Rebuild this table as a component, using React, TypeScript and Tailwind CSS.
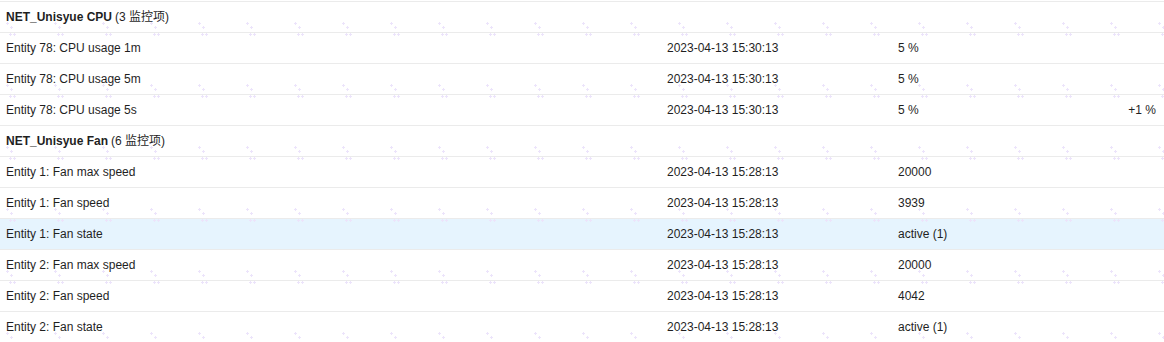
import React from "react";

type Row =
  | { kind: "group"; name: string; count: string }
  | { kind: "item"; name: string; time: string; value: string; change?: string; hl?: boolean };

const rows: Row[] = [
  { kind: "group", name: "NET_Unisyue CPU", count: "(3 监控项)" },
  { kind: "item", name: "Entity 78: CPU usage 1m", time: "2023-04-13 15:30:13", value: "5 %" },
  { kind: "item", name: "Entity 78: CPU usage 5m", time: "2023-04-13 15:30:13", value: "5 %" },
  { kind: "item", name: "Entity 78: CPU usage 5s", time: "2023-04-13 15:30:13", value: "5 %", change: "+1 %" },
  { kind: "group", name: "NET_Unisyue Fan", count: "(6 监控项)" },
  { kind: "item", name: "Entity 1: Fan max speed", time: "2023-04-13 15:28:13", value: "20000" },
  { kind: "item", name: "Entity 1: Fan speed", time: "2023-04-13 15:28:13", value: "3939" },
  { kind: "item", name: "Entity 1: Fan state", time: "2023-04-13 15:28:13", value: "active (1)", hl: true },
  { kind: "item", name: "Entity 2: Fan max speed", time: "2023-04-13 15:28:13", value: "20000" },
  { kind: "item", name: "Entity 2: Fan speed", time: "2023-04-13 15:28:13", value: "4042" },
  { kind: "item", name: "Entity 2: Fan state", time: "2023-04-13 15:28:13", value: "active (1)" },
];

function Watermark() {
  return (
    <svg className="pointer-events-none absolute inset-0 h-full w-full" aria-hidden="true">
      <defs>
        <pattern id="wm" x="0" y="0" width="48" height="62" patternUnits="userSpaceOnUse">
          <g stroke="#ece4fb" strokeWidth="1" shapeRendering="crispEdges">
            <path d="M9 34.5h3M10.5 33v3M13 34.5h3M14.5 33v3" />
            <path d="M6 23.5h3M7.5 22v3M10 27.5h3M11.5 26v3" />
          </g>
        </pattern>
      </defs>
      <rect x="0" y="0" width="100%" height="100%" fill="url(#wm)" />
    </svg>
  );
}

export default function App() {
  return (
    <div
      className="relative w-[1164px] h-[342px] overflow-hidden bg-white pt-px text-[12px] text-[#1f1f1f]"
      style={{ fontFamily: '"Liberation Sans", Arial, "Noto Sans CJK SC", sans-serif' }}
    >
      {rows.map((r, i) =>
        r.kind === "group" ? (
          <div key={i} className="flex h-[31px] items-center border-t border-[#ebebeb] px-[6px]">
            <span className="font-bold">{r.name}</span>
            <span className="ml-[3px]">{r.count}</span>
          </div>
        ) : (
          <div
            key={i}
            className={
              "flex h-[31px] items-center border-t border-[#ebebeb] " + (r.hl ? "bg-[#e6f4fe]" : "")
            }
          >
            <div className="w-[667px] pl-[6px]">{r.name}</div>
            <div className="w-[231px]">{r.time}</div>
            <div className="w-[200px]">{r.value}</div>
            <div className="flex-1 pr-[8px] text-right">{r.change ?? ""}</div>
          </div>
        )
      )}
      <div className="border-t border-[#ebebeb]" />
      <Watermark />
    </div>
  );
}
